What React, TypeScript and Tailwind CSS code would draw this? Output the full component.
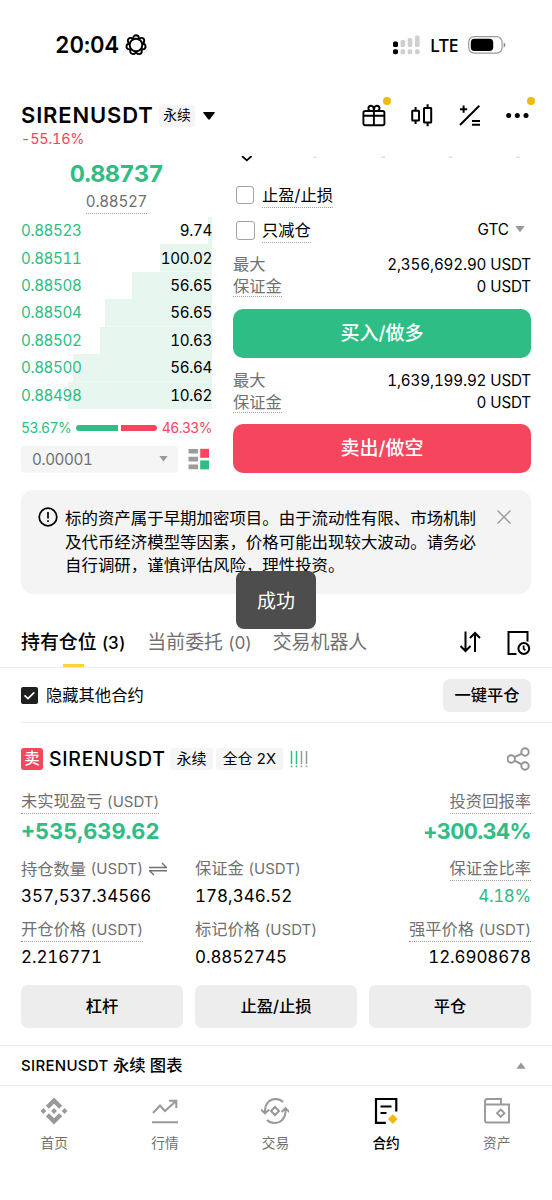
import type { ReactNode } from 'react';

const bids = [
  { price: '0.88523', size: '9.74', depth: 4 },
  { price: '0.88511', size: '100.02', depth: 52 },
  { price: '0.88508', size: '56.65', depth: 80 },
  { price: '0.88504', size: '56.65', depth: 107 },
  { price: '0.88502', size: '10.63', depth: 112 },
  { price: '0.88500', size: '56.64', depth: 139 },
  { price: '0.88498', size: '10.62', depth: 144 },
];

const lobes = Array.from({ length: 7 }, (_, i) => {
  const t = (i / 7) * Math.PI * 2;
  return { x: 11 + 6.9 * Math.sin(t), y: 11 - 6.9 * Math.cos(t) };
});

function Dotted({ children, className = '' }: { children: ReactNode; className?: string }) {
  return <span className={`border-b border-dotted border-[#a0a0a0] ${className}`}>{children}</span>;
}

function StatusBar() {
  return (
    <div className="flex h-[90px] items-center pl-[55px] pr-[46px]">
      <span className="text-[22.5px] font-semibold tracking-[-0.05px]">20:04</span>
      <svg className="ml-[6px]" width="22" height="22" viewBox="0 0 22 22" stroke="#000" strokeWidth="1.9">
        {lobes.map((l) => <circle key={l.x} cx={l.x} cy={l.y} r="2.8" fill="none" />)}
        <circle cx="11" cy="11" r="6.3" fill="#fff" />
      </svg>
      <svg className="ml-auto" width="28" height="20" viewBox="0 0 28 20">
        <g fill="#000"><rect x="0" y="6.500" width="5" height="5.5" rx="1.6" /><rect x="0" y="14.200" width="5" height="5" rx="1.8" /></g>
        <g fill="#cfcfcf">
          <rect x="7.500" y="5" width="4.6" height="7" rx="1.5" /><rect x="14.700" y="3" width="4.6" height="9" rx="1.5" /><rect x="22" y="0.500" width="4.6" height="11.5" rx="1.5" />
          <rect x="7.500" y="14.200" width="4.6" height="5" rx="1.8" /><rect x="14.700" y="14.200" width="4.6" height="5" rx="1.8" /><rect x="22" y="14.200" width="4.6" height="5" rx="1.8" />
        </g>
      </svg>
      <span className="ml-[9px] w-[29px] font-['Noto_Sans'] text-[18px] font-medium tracking-[-0.4px]">LTE</span>
      <svg className="ml-[9px]" width="38" height="18" viewBox="0 0 38 18">
        <rect x="0.7" y="0.7" width="33.4" height="16.4" rx="5.4" fill="none" stroke="#999" strokeWidth="1.2" />
        <rect x="2.8" y="2.8" width="22.4" height="12.2" rx="3.8" fill="#000" />
        <path d="M35.7 6.4c2.2.9 2.2 4.1 0 5z" fill="#888" />
      </svg>
    </div>
  );
}

function Header() {
  return (
    <div className="flex h-[66px] justify-between pl-[21px] pr-[23px]">
      <div className="flex flex-col pt-[13px]">
        <div className="flex h-[25px] items-center">
          <span className="w-[138px] text-[22px] font-semibold tracking-[0.85px]">SIRENUSDT</span>
          <span className="flex h-[22px] w-[36px] items-center justify-center rounded-[3px] bg-[#f5f5f5] text-[13.7px]">永续</span>
          <svg className="ml-[8px]" width="12" height="8" viewBox="0 0 12 8"><path d="M0.8 0h10.4q1.1 0 .4 1L6.8 7.3Q6 8.2 5.2 7.3L.4 1Q-.3 0 .8 0" /></svg>
        </div>
        <span className="text-[14.4px] leading-[22px] tracking-[-0.2px] text-[#f6465d]">-55.16%</span>
      </div>
      <div className="flex h-[50px] items-center">
        <div className="relative">
          <svg width="24" height="24" viewBox="0 0 24 24" fill="none" stroke="#000" strokeWidth="1.9" strokeLinejoin="round">
            <rect x="1.4" y="8" width="21" height="14.3" rx="1.8" /><path d="M1.4 12.7h21M11.9 8v14.2M11.9 8H9C5.3 8 5.7 2.8 9 2.8c2.2 0 2.9 2 2.9 5.2ZM11.9 8h3c3.7 0 3.3-5.2 0-5.2-2.2 0-3 2-3 5.2Z" />
          </svg>
          <span className="absolute -top-[6px] left-[21px] size-[8px] rounded-full bg-[#f0b90b]" />
        </div>
        <svg className="ml-[24px]" width="24" height="24" viewBox="0 0 24 24" fill="none" stroke="#000" strokeWidth="2">
          <rect x="2.2" y="7.7" width="6.8" height="9.8" rx=".5" /><rect x="14" y="5" width="7.2" height="14.5" rx=".5" /><path d="M5.6 4v3.7M5.6 17.5V21M17.6 1.3V5M17.6 19.5v3.7" />
        </svg>
        <svg className="ml-[24px]" width="24" height="24" viewBox="0 0 24 24" fill="none" stroke="#000" strokeWidth="2">
          <path d="M2 22 21.3 2.8M2 6.2h7.2M5.6 2.6v7.2M14 18h8M14 21.7h8" />
        </svg>
        <div className="relative ml-[23px]">
          <svg width="24" height="24" viewBox="0 0 24 24"><circle cx="3.7" cy="12.5" r="2.5" /><circle cx="12.3" cy="12.5" r="2.5" /><circle cx="21" cy="12.5" r="2.5" /></svg>
          <span className="absolute -top-[6px] left-[22px] size-[8px] rounded-full bg-[#f0b90b]" />
        </div>
      </div>
    </div>
  );
}

function OrderBook() {
  return (
    <div className="flex w-[191px] flex-col">
      <span className="mt-[3px] text-center text-[23.5px] leading-[30px] font-bold tracking-[-0.6px] text-[#2ebd85]">0.88737</span>
      <Dotted className="mt-[1px] mb-[3px] self-center pt-px text-[15.2px] leading-[22px] tracking-[-0.25px] text-[#707070]">0.88527</Dotted>
      {bids.map((b) => (
        <div key={b.price} className="flex h-[27.43px] items-center justify-between bg-right bg-no-repeat text-[15.2px] leading-[27px]" style={{ backgroundImage: 'linear-gradient(#e8f6f0,#e8f6f0)', backgroundSize: `${b.depth}px 100%` }}>
          <span className="tracking-[-0.4px] text-[#2ebd85]">{b.price}</span>
          <span className="tracking-[-0.35px]">{b.size}</span>
        </div>
      ))}
      <div className="mt-[8px] flex h-[22px] items-center justify-between text-[14px] tracking-[-0.6px]">
        <span className="text-[#2ebd85]">53.67%</span>
        <div className="flex w-[81px] gap-[2.5px]">
          <span className="h-[6px] w-[42px] rounded-l-full bg-[#2ebd85]" />
          <span className="h-[6px] flex-1 rounded-r-full bg-[#f6465d]" />
        </div>
        <span className="text-[#f6465d]">46.33%</span>
      </div>
      <div className="mt-[7px] flex items-center">
        <div className="flex h-[27px] w-[157px] items-center justify-between rounded-[4px] bg-[#f5f5f5] pr-[10px] pl-[11px] text-[15.2px] text-[#707070]">
          <span className="pt-[2px] tracking-[-0.4px]">0.00001</span>
          <svg width="9" height="6" viewBox="0 0 9 6"><path d="M.4 0h8.2L4.5 5.6z" fill="#999" /></svg>
        </div>
        <svg className="ml-[10px]" width="22" height="22" viewBox="0 0 22 22">
          <path fill="#9c9c9c" d="M.5 1h9.5v4.6H.5zM.5 8.8h9.5v4.6H.5zM.5 16.6h9.5v4.6H.5z" /><path fill="#f6465d" d="M12.2.8h8.8v9h-8.8z" /><path fill="#2ebd85" d="M12.2 12.4h8.8v9h-8.8z" />
        </svg>
      </div>
    </div>
  );
}

function Limits({ max }: { max: string }) {
  return (
    <div className="h-[44px] text-[15.2px] leading-[22px] tracking-[-0.15px]">
      <div className="flex h-[22px] justify-between"><span className="text-[16.3px] tracking-normal text-[#707070]">最大</span><span className="pt-px">{max} USDT</span></div>
      <div className="flex h-[22px] justify-between"><Dotted className="h-[22px] text-[16.3px] tracking-normal text-[#707070]">保证金</Dotted><span className="pt-px">0 USDT</span></div>
    </div>
  );
}

function OrderForm() {
  return (
    <div className="flex w-[298px] flex-col">
      <svg width="298" height="8" viewBox="0 0 298 8" fill="none"><path d="m9 0 4.8 4.3L18.6 0" stroke="#000" strokeWidth="1.8" /><path d="M80 1.2h4M148 1.2h4M215.500 1.2h4M283 1.2h4" stroke="#e2e2e2" strokeWidth="1.5" /></svg>
      <div className="mt-[20px] flex h-[25px] items-start pl-[3px] text-[16.3px]">
        <span className="mt-[2px] size-[18px] rounded-[3px] border border-[#a3a3a3]" />
        <Dotted className="ml-[8px] h-[24px] leading-[23px]">止盈/止损</Dotted>
      </div>
      <div className="mt-[10px] flex h-[25px] items-start pl-[3px] text-[16.3px]">
        <span className="mt-[2px] size-[19px] rounded-[3px] border border-[#a3a3a3]" />
        <Dotted className="ml-[7px] h-[24px] leading-[23px]">只减仓</Dotted>
        <span className="ml-auto text-[15.3px] leading-[22px]">GTC</span>
        <svg className="mt-[7px] mr-[6px] ml-[6px]" width="10" height="7" viewBox="0 0 10 7"><path d="M.3 0h9.400L5 6.200z" fill="#999" /></svg>
      </div>
      <div className="mt-[9px]"><Limits max="2,356,692.90" /></div>
      <button className="mt-[12px] h-[49px] rounded-[10px] bg-[#2ebd85] pt-[2px] text-[19px] font-medium text-white">买入/做多</button>
      <div className="mt-[11px]"><Limits max="1,639,199.92" /></div>
      <button className="mt-[11px] h-[49px] rounded-[10px] bg-[#f6465d] pt-[2px] text-[19px] font-medium text-white">卖出/做空</button>
    </div>
  );
}

function Notice() {
  return (
    <div className="mx-[21px] flex h-[104px] rounded-[12px] bg-[#f4f4f4] pt-[17px] pl-[17px]">
      <svg width="20" height="20" viewBox="0 0 20 20" fill="none" stroke="#000" strokeWidth="1.7"><circle cx="10" cy="10" r="8.800" /><path d="M10 5v6.500M10 13.200v1.800" /></svg>
      <p className="ml-[7px] text-[16.45px] leading-[23.500px] whitespace-nowrap">
        标的资产属于早期加密项目。由于流动性有限、市场机制<br />及代币经济模型等因素，价格可能出现较大波动。请务必<br />自行调研，谨慎评估风险，理性投资。
      </p>
      <svg className="mt-[2px] ml-[20px]" width="16" height="16" viewBox="0 0 16 16" stroke="#999" strokeWidth="1.4"><path d="m1.500 1.500 13 13M14.500 1.500l-13 13" /></svg>
    </div>
  );
}

function Tabs() {
  return (
    <div className="flex h-[74px] items-end border-b border-[#ececec] px-[21px] text-[18.900px] leading-[26px]">
      <div className="flex flex-col items-center">
        <span className="font-medium whitespace-nowrap">持有仓位 <span className="text-[17px] font-medium tracking-[-0.2px]">(3)</span></span>
        <span className="mt-[8px] h-[3px] w-[21px] bg-[#fcd535]" />
      </div>
      <span className="mb-[11px] ml-[22px] whitespace-nowrap text-[#707070]">当前委托 <span className="text-[17px] tracking-[-0.2px]">(0)</span></span>
      <span className="mb-[11px] ml-[21px] whitespace-nowrap text-[#707070]">交易机器人</span>
      <svg className="mb-[13px] ml-auto" width="24" height="24" viewBox="0 0 24 24" fill="none" stroke="#000" strokeWidth="2"><path d="M7.500 1.500v19.500M2.500 16l5 5 5-5M17 22V3M12 8l5-5 5 5" /></svg>
      <svg className="mb-[11px] ml-[25px]" width="24" height="26" viewBox="0 0 24 26" fill="none" stroke="#000" strokeWidth="2"><path d="M20.500 11.500V2H1.500v22H9.500" /><circle cx="16.800" cy="18.500" r="5.400" /><path d="M16.600 15.500v3.200l1.800 1.600" strokeWidth="1.700" /></svg>
    </div>
  );
}

function Position() {
  return (
    <div className="px-[21px]">
      <div className="flex h-[22px] items-center">
        <span className="flex size-[22px] items-center justify-center rounded-[3px] bg-[#f6465d] text-[15.500px] font-medium text-white">卖</span>
        <span className="ml-[6px] w-[121px] pt-px text-[19.500px] font-medium tracking-[0.7px]">SIRENUSDT</span>
        <span className="flex h-[22px] w-[43px] items-center justify-center rounded-[3px] bg-[#f5f5f5] text-[15px]">永续</span>
        <span className="ml-[3px] flex h-[22px] w-[67px] items-center justify-center rounded-[3px] bg-[#f5f5f5] text-[14.800px] whitespace-nowrap">全仓 2X</span>
        <svg className="ml-[7px]" width="18" height="18" viewBox="0 0 18 18" strokeWidth="1.500"><path stroke="#2ebd85" d="M1.500 1v13M6.500 1v13M1.500 15.500v1.800M6.500 15.500v1.800" /><path stroke="#999" d="M11.500 1v13M16.500 1v13M11.500 15.500v1.800M16.500 15.500v1.800" /></svg>
        <svg className="ml-auto" width="24" height="24" viewBox="0 0 24 24" fill="none" stroke="#929292" strokeWidth="1.900"><circle cx="4.200" cy="12" r="3.700" /><circle cx="18" cy="5" r="3.700" /><circle cx="18" cy="19" r="3.700" /><path d="m7.500 10.200 7.300-3.500M7.500 13.700l7.300 3.600" /></svg>
      </div>
      <div className="mt-[20px] flex justify-between text-[16.3px] leading-[22px] text-[#707070]">
        <Dotted className="h-[24px]">未实现盈亏 <span className="text-[15px]">(USDT)</span></Dotted>
        <Dotted className="h-[24px]">投资回报率</Dotted>
      </div>
      <div className="mt-[3px] flex justify-between text-[21.800px] leading-[28px] font-bold text-[#2ebd85]">
        <span>+535,639.62</span><span className="tracking-[-0.6px]">+300.34%</span>
      </div>
      <div className="mt-[11px] grid h-[61px] grid-cols-[174px_174px_162px] content-start text-[16.3px] leading-[24px] text-[#707070]">
        <span className="flex items-center whitespace-nowrap">持仓数量&nbsp;<span className="text-[15px]">(USDT)</span>
          <svg className="ml-[6px]" width="18" height="14" viewBox="0 0 18 14" fill="none" stroke="#707070" strokeWidth="1.400"><path d="M0 5.500h17.500L13 1M18 8.800H.5L5 13" /></svg>
        </span>
        <span>保证金 <span className="text-[15px]">(USDT)</span></span>
        <Dotted className="h-[25px] justify-self-end">保证金比率</Dotted>
        <span className="mt-[3px] text-[17px] text-black">357,537.34566</span><span className="mt-[3px] text-[17px] text-black">178,346.52</span><span className="mt-[3px] text-right text-[17px] tracking-[-0.3px] text-[#2ebd85]">4.18%</span>
      </div>
      <div className="grid grid-cols-[174px_148px_188px] text-[16.3px] leading-[24px] text-[#707070]">
        <Dotted className="h-[25px] justify-self-start">开仓价格 <span className="text-[15px]">(USDT)</span></Dotted>
        <span>标记价格 <span className="text-[15px]">(USDT)</span></span>
        <Dotted className="h-[25px] justify-self-end">强平价格 <span className="text-[15px]">(USDT)</span></Dotted>
        <span className="mt-[3px] text-[17px] tracking-[-0.1px] text-black">2.216771</span><span className="mt-[3px] text-[17px] tracking-[-0.1px] text-black">0.8852745</span><span className="mt-[3px] text-right text-[17px] tracking-[-0.1px] text-black">12.6908678</span>
      </div>
      <div className="mt-[16px] grid grid-cols-3 gap-[12px] text-[16.3px] font-medium">
        <button className="h-[43px] rounded-[7px] bg-[#ededed]">杠杆</button>
        <button className="h-[43px] rounded-[7px] bg-[#ededed]">止盈/止损</button>
        <button className="h-[43px] rounded-[7px] bg-[#ededed]">平仓</button>
      </div>
    </div>
  );
}

function NavItem({ label, active = false, children }: { label: string; active?: boolean; children: ReactNode }) {
  return (
    <div className={`flex flex-1 flex-col items-center ${active ? 'font-medium text-black' : 'text-[#707070]'}`}>
      <svg width="28" height="28" viewBox="0 0 28 28" fill="none" stroke={active ? '#000' : '#999'} strokeWidth="2">{children}</svg>
      <span className="mt-[7px] text-[13.700px] leading-[22px]">{label}</span>
    </div>
  );
}

function BottomNav() {
  return (
    <div className="-ml-px flex pt-[11px]">
      <NavItem label="首页">
        <g fill="#999" stroke="none"><path d="m14 .5 8.200 8.200-3.200 3.100-5-5-5 5-3.200-3.100zM14 27.500l8.200-8.200-3.200-3.100-5 5-5-5-3.200 3.100zM14 11.100l2.900 2.900-2.900 2.900-2.900-2.900zM3.400 11.100 6.300 14l-2.900 2.900L.5 14zM24.600 11.100l2.900 2.900-2.900 2.900-2.900-2.900z" /></g>
      </NavItem>
      <NavItem label="行情"><path d="m2 16 7-7.500 5 5.500L25 4M18 3.800h7.300V11M1 25.300h26" /></NavItem>
      <NavItem label="交易"><path d="M4 16V13C4.500 6 9 2 14.500 2c3 0 5.500 1 7.500 3M0 12.500l4 3.800 4.200-3.800M24.500 12v3c-.500 7-5 11-11 11-3 0-5.500-1-7.500-3M20.500 15l4-3.800 4 3.800M14 10l4 4-4 4-4-4z" /></NavItem>
      <NavItem label="合约" active><path d="M24.300 14.500V2H4v23.800h9.800M8.500 9.500h11M8.500 16h6" strokeWidth="2.200" /><path d="m20.800 17.300 4.800 4.800-4.800 4.800-4.800-4.800z" fill="#f0b90b" stroke="none" /></NavItem>
      <NavItem label="资产"><path d="M2 7.500h24v18H4q-2 0-2-2V4.500q0-2.500 2.500-2.500H18v5.500M17.700 12.500l3.700 3.700-3.700 3.700-3.700-3.700z" strokeWidth="1.900" /></NavItem>
    </div>
  );
}

export default function App() {
  return (
    <div className="relative h-[1200px] w-[552px] overflow-hidden bg-white font-['Inter','Noto_Sans_CJK_SC',sans-serif] text-black tabular-nums">
      <StatusBar />
      <Header />
      <div className="flex h-[334px] gap-[21px] px-[21px]"><OrderBook /><OrderForm /></div>
      <Notice />
      <Tabs />
      <div className="ml-[21px] flex h-[55px] items-center border-b border-[#ececec] pr-[21px] text-[16.3px]">
        <svg width="17" height="17" viewBox="0 0 17 17"><rect width="17" height="17" rx="2" fill="#1f1f1f" /><path d="m3.500 8.300 3.500 3.300 6.300-6.200" fill="none" stroke="#fff" strokeWidth="1.700" /></svg>
        <span className="ml-[8px]">隐藏其他合约</span>
        <button className="ml-auto h-[33px] w-[88px] rounded-[7px] bg-[#ededed] font-medium">一键平仓</button>
      </div>
      <div className="pt-[25px]"><Position /></div>
      <div className="mt-[17px] flex h-[41px] items-center justify-between border-y border-[#ececec] pr-[26px] pl-[21px] text-[16.3px] font-medium">
        <span><span className="text-[15px] tracking-[0.3px]">SIRENUSDT</span> 永续 图表</span>
        <svg width="10" height="7" viewBox="0 0 10 7"><path d="M.300 6.700h9.400L5 .500z" fill="#999" /></svg>
      </div>
      <BottomNav />
      <div className="absolute top-[571px] left-[236px] flex h-[58px] w-[80px] items-center justify-center rounded-[8px] bg-[#4d4d4d] pt-[4px] text-[19px] text-white">成功</div>
    </div>
  );
}
